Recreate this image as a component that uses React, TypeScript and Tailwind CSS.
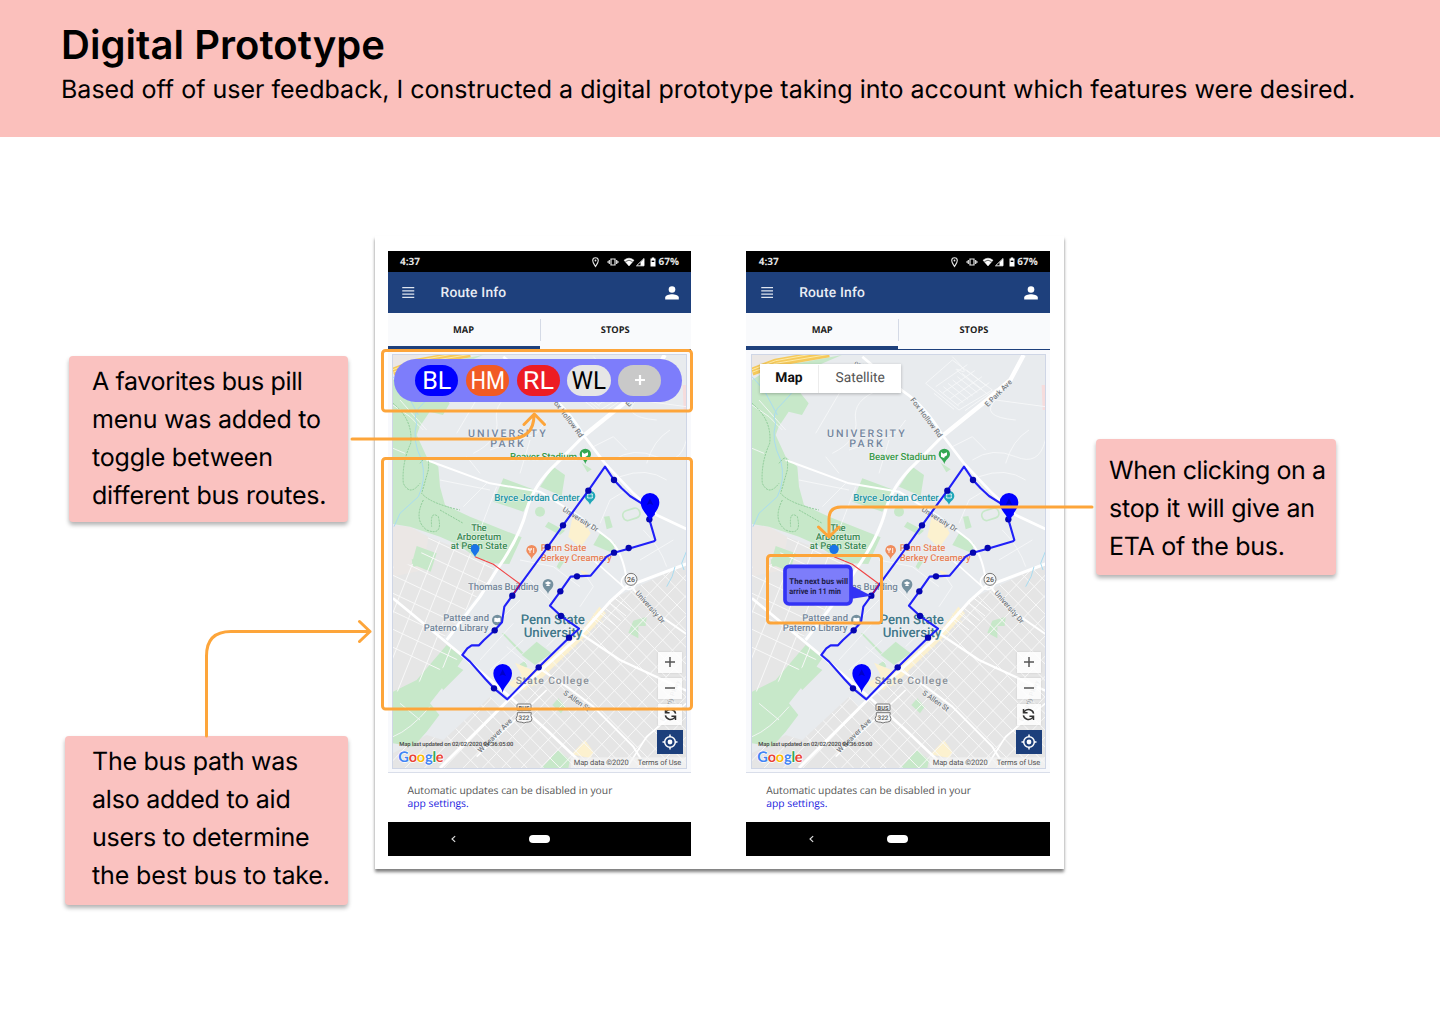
import React from "react";

const STOPS: [number, number][] = [
  [702, 180], [625, 212], [549, 316], [503, 381], [808, 298], [746, 384], [702, 398], [591, 469],
  [541, 514], [543, 588], [567, 653], [476, 742], [342, 805], [344, 631], [397, 527],
];

const GREENS = [
  "39,-120 100,-160 200,-175 309,-195 204,-150 169,-100 209,-50 189,-15 149,-25 119,20 110,45 140,110 175,140 180,200 195,255 270,290 395,340 425,352 388,432 340,430 285,410 235,375 180,350 90,320 39,312",
  "370,175 465,210 430,275 340,245",
  "520,140 555,165 545,228 480,200",
  "605,128 635,148 622,157",
  "505,305 555,332 540,345 495,320",
  "660,340 705,370 700,400 640,375",
  "672,290 688,288 698,322 680,328",
  "110,378 170,400 152,455 95,432",
  "200,675 250,715 205,780 150,850 178,885 140,935 100,980 39,970 39,815 110,780",
  "470,665 515,700 465,735 425,705",
  "365,640 372,640 430,698 424,702",
  "420,732 435,722 442,740 425,750 415,745",
  "760,602 800,590 797,618 775,618 775,655 745,638",
  "535,835 557,860 543,880 517,855",
  "535,990 570,1020 565,1044 485,1044",
  "230,738 250,750 190,810 175,790",
  "95,418 140,420 145,432 100,440",
  "540,420 552,425 538,448 530,440",
];

const YELLOWS = [
  "578,290 620,315 632,340 600,385 565,350",
  "658,560 678,580 625,640 480,780 455,800 440,770 600,640",
  "405,728 480,760 435,810 395,800 385,790 425,765",
  "615,960 640,995 632,1015 575,1003",
  "600,450 625,460 615,475",
];

const range = (n: number) => Array.from({ length: n }, (_, i) => i);

function Pin({ x, y }: { x: number; y: number }) {
  return (
    <g transform={`translate(${x} ${y})`}>
      <path d="M0 58 C-4 38 -28 25 -28 0 A28 28 0 0 1 28 0 C28 25 4 38 0 58Z" fill="#0000ff" />
      <path d="M0 -12 L10 8 L0 4 L-10 8Z" fill="#0000c8" />
    </g>
  );
}

type LabelProps = {
  x: number; y: number; w: number; size: number; fill: string;
  rotate?: number; children: string;
};

function Label({ x, y, w, size, fill, rotate = 0, children }: LabelProps) {
  return (
    <text
      transform={`translate(${x} ${y}) rotate(${rotate})`}
      textLength={w}
      fontSize={size}
      fontWeight={500}
      fill={fill}
      stroke="#f4f6f7"
      strokeWidth={4}
      strokeOpacity={0.6}
      paintOrder="stroke"
    >
      {children}
    </text>
  );
}

function CampusMap({ id, eta }: { id: string; eta?: boolean }) {
  return (
    <svg viewBox="39 -195 879 1239" className="block h-[413px] w-[293px] font-['Roboto',sans-serif] [text-rendering:geometricPrecision]">
      <defs>
        <clipPath id={`${id}-se`}>
          <path d="M919 430 L690 540 L420 810 L360 860 L330 830 L190 960 L140 945 L39 1000 V1044 H919Z" />
        </clipPath>
        <clipPath id={`${id}-sw`}>
          <path d="M145 350 L345 430 L330 480 L190 655 L39 530 V440 L110 430Z M39 540 L245 710 L110 790 L39 820Z" />
        </clipPath>
      </defs>
      <rect x="39" y="-195" width="879" height="1239" fill="#e8ebee" />
      <path d="M919 430 L690 540 L420 810 L360 860 L330 830 L190 960 L140 945 L39 1000 V1044 H919Z" fill="#e5e5e5" />
      <path d="M145 350 L345 430 L330 480 L190 655 L39 530 V400Z M39 540 L245 710 L110 790 L39 820Z" fill="#e6e6e6" />
      <path d="M39 315 L90 320 L145 350 L130 450 L39 470Z" fill="#ebe7e5" />
      <path d="M39 -195 H120 L39 -140Z" fill="#ebe7e5" />
      {GREENS.map((p) => <polygon key={p} points={p} fill="#c7e8c9" />)}
      {YELLOWS.map((p) => <polygon key={p} points={p} fill="#fcf1cf" />)}
      <circle cx="480" cy="275" r="15" fill="#c7e8c9" />
      <rect x="728" y="268" width="52" height="30" rx="14" fill="none" stroke="#c7e8c9" strokeWidth="5" transform="rotate(-18 754 283)" />
      <path d="M908 -105 h11 v75 h-8Z" fill="#f6dcdc" />

      {/* highway in the north-west corner */}
      <path d="M39 -145 L110 -172 L270 -200" fill="none" stroke="#f5c95a" strokeWidth="24" />
      <path d="M39 -143 L110 -170 L270 -197 M39 -151 L110 -178 L220 -198" fill="none" stroke="#fde9a6" strokeWidth="3" />

      {/* residential streets */}
      <g clipPath={`url(#${id}-se)`} stroke="#f8f8f8" strokeWidth="3">
        {range(25).map((i) => <line key={`a${i}`} x1={-500 + i * 58} y1="1100" x2={150 + i * 58} y2="420" />)}
        {range(28).map((i) => <line key={`b${i}`} x1={-320 + i * 49} y1="420" x2={330 + i * 49} y2="1080" />)}
      </g>
      <g clipPath={`url(#${id}-sw)`} stroke="#f8f8f8" strokeWidth="3">
        {range(10).map((i) => <line key={`a${i}`} x1={-120 + i * 54} y1="840" x2={80 + i * 54} y2="340" />)}
        {range(9).map((i) => <line key={`b${i}`} x1="39" y1={250 + i * 54} x2="420" y2={430 + i * 54} />)}
      </g>
      <g fill="none" stroke="#f7f8f9" strokeWidth="2.6">
        <path d="M230 40 L330 -130 M280 100 Q360 60 350 0 T420 -90 M500 0 L470 40 L330 90 M560 -110 L640 -180 L760 -90 L660 -30Z" />
        {range(8).map((i) => <path key={i} d={`M${585 + i * 14} ${-80 - i * 10} l60 48`} />)}
        {range(5).map((i) => <path key={i} d={`M${590 + i * 22} ${-100 + i * 18} l95 -66`} />)}
        <path d="M640 -190 Q700 -130 660 -150 T770 -60 Q720 -10 830 0 M770 -60 L919 -40 M700 120 Q760 80 830 110 T919 60 M720 170 Q800 140 860 180 M800 130 Q820 60 870 30 M740 210 L690 240 L660 310" />
        <path d="M320 190 L250 260 M350 200 L300 330 M180 180 L330 210 M450 60 L420 160 M260 110 L300 160 M640 80 L700 50 L740 90" />
        <path d="M420 420 L520 440 L600 500 M440 470 L520 550 M320 640 L420 540 M300 720 L400 610 M330 750 L430 660 M380 680 L440 730 M500 680 L560 620 M280 730 L340 790 M600 560 L640 500 L620 470" />
        <path d="M780 420 L880 360 M790 330 Q840 380 860 440" />
        <path d="M39 -45 L90 -10 L130 30 M60 -60 L140 30 M75 100 L39 85 M39 950 Q90 930 150 860 M60 850 L120 900" />
      </g>
      <g stroke="#fbf3d8" strokeWidth="2.6">
        {range(11).map((i) => <line key={i} x1={440 + i * 20} y1={770 - i * 19} x2={470 + i * 20} y2={798 - i * 19} />)}
      </g>
      <g stroke="#fff" strokeWidth="3">
        {range(5).map((i) => <line key={i} x1={640 + i * 16} y1={590 - i * 14} x2={690 + i * 16} y2={630 - i * 14} />)}
      </g>

      {/* arterial roads */}
      <g fill="none" stroke="#fff" strokeLinejoin="round">
        <path strokeWidth="13" d="M854 -195 L814 -120 L744 -60 L614 45" />
        <path strokeWidth="9" d="M614 45 L530 130 Q460 195 440 270 Q420 350 350 450 L300 530 L200 660" />
        <path strokeWidth="8" d="M370 -190 L494 -85 Q560 -40 610 45 L675 130 L760 220 L830 285 L919 327" />
        <path strokeWidth="6" d="M140 120 L330 190 L480 215 L600 290 L690 360 Q730 400 740 480 L770 520 L830 580 L919 642" />
        <path strokeWidth="9" d="M919 432 L740 500 L690 545 L600 645 L385 840 L180 1044" />
        <path strokeWidth="8" d="M39 535 L245 705 L400 840 L500 930 L620 1044" />
        <path strokeWidth="7" d="M600 640 L720 720 L919 812" />
        <path strokeWidth="6" d="M470 740 L560 800 L640 860 L760 980 L800 1044" />
        <path strokeWidth="5" d="M919 850 L800 950 L740 1044 M730 500 L640 420" />
        <path strokeWidth="5" d="M500 810 L290 1010" />
        <circle cx="746" cy="486" r="22" strokeWidth="5" />
      </g>

      {/* creeks and trails */}
      <g fill="none" stroke="#a9dcf0" strokeWidth="3">
        <path d="M210 -165 Q180 -100 130 -50 Q95 -20 110 10 Q95 60 125 120 Q140 180 115 230 L60 280 L42 320 M39 -130 L75 -90 L115 -15" />
        <path d="M885 440 Q880 470 860 500 M919 395 L905 430 L912 450" />
      </g>
      <g fill="none" stroke="#80c48b" strokeWidth="2.4" strokeDasharray="6 3">
        <path d="M39 -50 Q100 0 92 70 Q65 130 70 190 Q90 230 120 190 M120 130 Q150 90 145 150 L125 220 Q150 250 240 270 M130 240 Q100 300 140 330 Q190 350 175 290 Q150 270 155 320 M180 270 L250 310" />
      </g>

      {/* labels */}
      <g>
        <Label x={345} y={-168} w={50} size={19} fill="#80868b" rotate={28}>ox Hol</Label>
        <Label x={264} y={50} w={233} size={32} fill="#7587a0">UNIVERSITY</Label>
        <Label x={331} y={80} w={100} size={32} fill="#7587a0">PARK</Label>
        <Label x={390} y={121} w={201} size={29.5} fill="#3a9a4b">Beaver Stadium</Label>
        <Label x={343} y={243} w={256} size={29.5} fill="#1e96a6">Bryce Jordan Center</Label>
        <Label x={274} y={332} w={46} size={28.5} fill="#3c8b55">The</Label>
        <Label x={230} y={360} w={134} size={28.5} fill="#3c8b55">Arboretum</Label>
        <Label x={212} y={388} w={170} size={28.5} fill="#3c8b55">at Penn State</Label>
        <Label x={482} y={394} w={137} size={28.5} fill="#e8835a">Penn State</Label>
        <Label x={482} y={422} w={213} size={28.5} fill="#e8835a">Berkey Creamery</Label>
        <Label x={264} y={511} w={212} size={29} fill="#74879a">Thomas Building</Label>
        <Label x={190} y={603} w={137} size={28.5} fill="#74879a">Pattee and</Label>
        <Label x={131} y={632} w={194} size={28.5} fill="#74879a">Paterno Library</Label>
        <Label x={422} y={611} w={193} size={40} fill="#42788a">Penn State</Label>
        <Label x={431} y={651} w={176} size={40} fill="#42788a">University</Label>
        <Label x={407} y={791} w={219} size={31} fill="#8a9097">State College</Label>
        <Label x={546} y={272} w={122} size={22} fill="#757a80" rotate={32}>University Dr</Label>
        <Label x={765} y={520} w={122} size={22} fill="#757a80" rotate={49}>University Dr</Label>
        <Label x={513} y={-60} w={143} size={22} fill="#757a80" rotate={53}>Fox Hollow Rd</Label>
        <Label x={746} y={-38} w={105} size={22} fill="#757a80" rotate={-45}>E Park Ave</Label>
        <Label x={548} y={822} w={92} size={22} fill="#757a80" rotate={35}>S Allen St</Label>
        <Label x={302} y={1000} w={135} size={22} fill="#757a80" rotate={-45}>W Beaver Ave</Label>
        <Label x={852} y={905} w={130} size={20} fill="#a0a4a8" rotate={-68}>Easterly Pkwy</Label>
      </g>

      {/* road shields */}
      <circle cx="753" cy="478" r="18" fill="#f6f6f6" stroke="#777" strokeWidth="3" />
      <text x="753" y="486" fontSize="21" fontWeight="500" textAnchor="middle" fill="#555">26</text>
      <rect x="411" y="852" width="42" height="20" rx="3" fill="#f6f6f6" stroke="#777" strokeWidth="3" />
      <text x="432" y="869" fontSize="17" fontWeight="700" textAnchor="middle" fill="#555">BUS</text>
      <path d="M412 878 h42 q-4 8 2 18 q0 10 -10 10 q-8 0 -14 3 q-6 -3 -14 -3 q-10 0 -10 -10 q6 -10 4 -18Z" fill="#f6f6f6" stroke="#777" strokeWidth="3" />
      <text x="432" y="901" fontSize="19" fontWeight="500" textAnchor="middle" fill="#555">322</text>

      {/* places */}
      <path d="M616 132 C612 118 599 114 599 103 A17 17 0 0 1 633 103 C633 114 620 118 616 132Z" fill="#34a853" />
      <path d="M606 110 v-14 l7 5 l11 -4 v9 l-8 5 v4Z" fill="#fff" />
      <path d="M630 254 C626 243 614 240 614 228 A16 16 0 0 1 646 228 C646 240 634 243 630 254Z" fill="#1fa7b8" />
      <path d="M623 222 h14 v4 q-3 2 0 4 v4 h-14 v-4 q3 -2 0 -4Z" fill="none" stroke="#fff" strokeWidth="2.5" />
      <path d="M455 418 C451 405 439 402 439 391 A16 16 0 0 1 471 391 C471 402 459 405 455 418Z" fill="#f08c5c" />
      <path d="M450 384 v15 M446 384 v6 h8 v-6 M461 384 v15" fill="none" stroke="#fff" strokeWidth="2.5" />
      <path d="M504 522 C500 510 488 506 488 493 A16 16 0 0 1 520 493 C520 506 508 510 504 522Z" fill="#74909f" />
      <path d="M494 489 l10 -5 l10 5 l-10 5Z M499 494 v4 h10 v-4" fill="#fff" />
      <circle cx="352" cy="600" r="16" fill="#74909f" />
      <path d="M343 594 q5 -2 9 1 q4 -3 9 -1 v12 q-5 -2 -9 1 q-4 -3 -9 -1Z" fill="#fff" />

      <text x="58" y="979" fontSize="17.5" fontWeight="500" fill="#444" textLength="342">Map last updated on 02/02/2020 04:36:05:00</text>
      <rect x="572" y="1012" width="346" height="32" fill="#f5f5f5" fillOpacity="0.7" />
      <text x="581" y="1035" fontSize="22.5" fill="#555" textLength="165">Map data ©2020</text>
      <text x="773" y="1035" fontSize="22.5" fill="#555" textLength="131">Terms of Use</text>
      <text x="55" y="1027" fontSize="44" fontWeight="700" textLength="136" className="font-['Lato',sans-serif]" stroke="#fff" strokeWidth="4" paintOrder="stroke">
        <tspan fill="#4285f4">G</tspan><tspan fill="#ea4335">o</tspan><tspan fill="#fbbc05">o</tspan><tspan fill="#4285f4">g</tspan><tspan fill="#34a853">l</tspan><tspan fill="#ea4335">e</tspan>
      </text>

      {/* bus route */}
      <path d="M285 410 L340 433 L420 492" fill="none" stroke="#f04545" strokeWidth="3.5" />
      <path
        d="M675 140 L702 180 L725 205 L750 228 L785 250 L822 282 L808 298 L826 360 L822 364 L746 386 L702 398 L680 410 L632 467 L572 470 L541 514 L510 557 L543 588 L597 626 L567 653 L476 742 L382 838 L342 805 L316 777 L270 725 L247 705 L262 685 L275 676 L297 676 L312 660 L344 631 L366 607 L373 560 L397 527 L503 381 L549 316 L625 212Z"
        fill="none" stroke="#2020f8" strokeWidth="6.3" strokeLinejoin="round"
      />
      <path d="M420 492 L397 527" stroke="#c01048" strokeWidth="3.5" />
      {STOPS.map(([x, y]) => <circle key={`${x}-${y}`} cx={x} cy={y} r="9.5" fill="#0505b0" />)}
      <Pin x={810} y={247} />
      <Pin x={368} y={760} />
      {eta ? (
        <circle cx="285" cy="388" r="14" fill="#1a73e8" />
      ) : (
        <path d="M285 411 C281 400 272 396 272 386 A13 13 0 0 1 298 386 C298 396 289 400 285 411Z" fill="#1a73e8" />
      )}

      {eta && (
        <g>
          <path d="M334 495 L397 527 L334 537Z" fill="#3333f5" />
          <rect x="138" y="439" width="198" height="113" rx="12" fill="#7d7dfa" stroke="#3333f5" strokeWidth="11" />
          <text x="151" y="492" fontSize="24" fontWeight="700" fill="#1c1c48" textLength="176" lengthAdjust="spacingAndGlyphs">The next bus will</text>
          <text x="151" y="523" fontSize="24" fontWeight="700" fill="#1c1c48" textLength="155" lengthAdjust="spacingAndGlyphs">arrive in 11 min</text>
        </g>
      )}
    </svg>
  );
}

const FAVORITES = [
  { name: "BL", style: "bg-[#0000ff] text-white", glyphs: "scale-x-100" },
  { name: "HM", style: "bg-[#f15a24] text-white", glyphs: "scale-x-[0.87]" },
  { name: "RL", style: "bg-[#ed1c24] text-white", glyphs: "scale-x-[1.08]" },
  { name: "WL", style: "bg-[#e6e6e6] text-black", glyphs: "scale-x-[0.97]" },
];

function FavoritesMenu() {
  return (
    <div className="absolute top-[3.5px] left-[0.5px] flex h-[43.5px] w-[288px] items-center gap-[7.5px] rounded-full bg-[#7d7dfb] pl-[21.5px] font-['Roboto',sans-serif]">
      {FAVORITES.map((f) => (
        <span key={f.name} className={`flex h-[31.5px] w-[43.3px] items-center justify-center rounded-full pt-[2px] text-[25px] leading-none ${f.style}`}>
          <span className={f.glyphs}>{f.name}</span>
        </span>
      ))}
      <span className="flex h-[31.5px] w-[43.3px] items-center justify-center rounded-full bg-[#c9c9c9]">
        <svg viewBox="0 0 10 10" className="size-[10px]"><path d="M5 0v10M0 5h10" stroke="#fff" strokeWidth="2.2" /></svg>
      </span>
    </div>
  );
}

function MapTypeControl() {
  return (
    <div className="absolute top-[8.5px] left-[8px] flex h-[29px] w-[141.5px] items-center bg-white pt-px font-['Roboto',sans-serif] text-[13.8px] shadow-[0_1px_3px_rgba(0,0,0,0.25)] [text-rendering:geometricPrecision]">
      <span className="flex h-full w-[59.5px] items-center justify-center border-r border-[#ececec] font-bold text-[#111]">Map</span>
      <span className="flex h-full flex-1 items-center justify-center text-[#555]">Satellite</span>
    </div>
  );
}

function MapButtons() {
  return (
    <div className="absolute top-[296.5px] left-[264px] flex w-[26px] flex-col items-center gap-[5.3px]">
      <div className="flex h-[21px] w-6 items-center justify-center bg-white/85 shadow-[0_0_2px_rgba(0,0,0,0.12)]">
        <svg viewBox="0 0 10 10" className="size-[10px]"><path d="M5 0v10M0 5h10" stroke="#555" strokeWidth="1.5" /></svg>
      </div>
      <div className="flex h-[21px] w-6 items-center justify-center bg-white/85 shadow-[0_0_2px_rgba(0,0,0,0.12)]">
        <svg viewBox="0 0 10 10" className="size-[10px]"><path d="M0 5h10" stroke="#555" strokeWidth="1.5" /></svg>
      </div>
      <div className="flex h-[21px] w-6 items-center justify-center bg-white/85 shadow-[0_0_2px_rgba(0,0,0,0.12)]">
        <svg viewBox="0 0 14 14" className="h-[13px] w-[13px]" fill="none" stroke="#333" strokeWidth="1.6">
          <path d="M12.5 6A5.6 5.3 0 0 0 3 3.2L1.800 4.500M1.600 1v4.200H6M1.500 8A5.600 5.300 0 0 0 11 10.800L12.200 9.500M12.400 13V8.800H8" />
        </svg>
      </div>
      <div className="flex h-[23.5px] w-[26px] items-center justify-center bg-[#1c3f7c]">
        <svg viewBox="0 0 16 16" className="size-4" fill="none" stroke="#fff" strokeWidth="1.5">
          <circle cx="8" cy="8" r="5.3" />
          <circle cx="8" cy="8" r="2.4" fill="#fff" stroke="none" />
          <path d="M8 .5v2.2M8 13.3v2.2M.5 8h2.2M13.3 8h2.2" />
        </svg>
      </div>
    </div>
  );
}

function StatusBar() {
  return (
    <div className="flex h-[21px] items-center justify-between bg-black pr-[12px] pl-[12.5px] font-['Open_Sans',sans-serif] text-[10px] font-bold text-[#e4e4e4] [text-rendering:geometricPrecision]">
      <span>4:37</span>
      <div className="flex items-center">
        <svg viewBox="0 0 66 12" className="h-[12px] w-[66px]" fill="none" stroke="#e8e8e8">
          <path d="M4.5 10.5C3 8 1.7 6.4 1.7 4.5a2.8 2.8 0 0 1 5.6 0C7.300 6.400 6 8 4.500 10.500Z" strokeWidth="1.1" />
          <circle cx="4.5" cy="4.5" r=".9" fill="#e8e8e8" stroke="none" />
          <path d="M20 3h4v6h-4ZM18.300 4v4M25.700 4v4M17 5.200v1.600M27 5.200v1.600" strokeWidth="1.2" />
          <path d="M33 4.200a8 8 0 0 1 10 0L38 10Z" fill="#fff" stroke="#fff" strokeWidth=".5" />
          <path d="M34.500 5.600a5.500 5.500 0 0 1 7 0" stroke="#000" strokeWidth=".6" />
          <path d="M45.500 9.800h7.500V2.500Z" strokeWidth="1" />
          <path d="M49.500 9.800h3.500V3L49.500 6.300Z" fill="#fff" stroke="none" />
          <path d="M59.500 2.500h1.300v-1h2.400v1H64.500V10.500h-5Z" fill="#fff" stroke="none" />
          <path d="M60.700 5.300h2.600" stroke="#000" strokeWidth="1.4" />
        </svg>
        <span className="ml-[1.5px]">67%</span>
      </div>
    </div>
  );
}

function Phone({ id, eta }: { id: string; eta?: boolean }) {
  return (
    <div className="flex h-[605px] w-[303.5px] flex-col bg-white">
      <StatusBar />
      <div className="flex h-[41px] items-center bg-[#1e407c] pr-[12px] pl-[14.5px]">
        <svg viewBox="0 0 12 11" className="h-[11px] w-[12.5px]" stroke="#dfe5ef" strokeWidth="1.2">
          <path d="M0 .7h12M0 3.900h12M0 7.100h12M0 10.300h12" />
        </svg>
        <span className="ml-[26px] pt-[2px] font-['Roboto',sans-serif] text-[13.8px] font-medium tracking-[0.2px] text-[#e9edf4] [text-rendering:geometricPrecision]">Route Info</span>
        <svg viewBox="0 0 14 14" className="ml-auto size-[14px] shrink-0" fill="#fff">
          <circle cx="7" cy="3.5" r="3.3" />
          <path d="M.2 13.5V11.500C.2 9.200 4.500 8.200 7 8.200s6.800 1 6.800 3.300v2Z" />
        </svg>
      </div>
      <div className="flex h-[37px] bg-[#f9fafc] font-['Open_Sans',sans-serif] text-[9.3px] font-bold text-[#1d1d1d] [text-rendering:geometricPrecision]">
        <div className="flex w-[152px] items-center justify-center border-b-4 border-[#1e407c]">MAP</div>
        <div className="relative flex flex-1 items-center justify-center border-b border-[#1e407c] pb-[3px]">
          <span className="absolute top-[6px] left-0 h-[22px] w-px bg-[#d5dae6]" />
          STOPS
        </div>
      </div>
      <div className="h-[423px] border-b border-[#d9deea] bg-[#f8f9fc] pt-[5px] pl-[5.5px]">
        <div className="relative h-[413px] w-[293px] outline outline-[#cfd6e6]">
          <CampusMap id={id} eta={eta} />
          {eta ? <MapTypeControl /> : <FavoritesMenu />}
          <MapButtons />
        </div>
      </div>
      <div className="flex-1 bg-white pt-[12px] pl-[20px] font-['Open_Sans',sans-serif] text-[10.32px] leading-[13px] text-[#555] [text-rendering:geometricPrecision]">
        <p className="whitespace-nowrap">Automatic updates can be disabled in your</p>
        <p className="font-medium text-[#2222e0]">app settings.</p>
      </div>
      <div className="flex h-[34.5px] items-center bg-black pl-[63px]">
        <svg viewBox="0 0 6 8" className="h-[8px] w-[5px]" fill="none" stroke="#ddd" strokeWidth="1.4"><path d="M5 .5L1.200 4L5 7.500" /></svg>
        <span className="ml-[73px] h-[8px] w-[21px] rounded-full bg-white" />
      </div>
    </div>
  );
}

function Connectors() {
  return (
    <svg viewBox="0 0 1440 1024" className="pointer-events-none absolute inset-0 h-[1024px] w-[1440px]" fill="none" stroke="#fda53a" strokeWidth="3" strokeLinecap="round" strokeLinejoin="round">
      <rect x="382.5" y="350.5" width="309" height="60.5" rx="3" />
      <rect x="382.5" y="458.5" width="309" height="250.5" rx="3" />
      <rect x="767.5" y="555.5" width="114" height="67.5" rx="3" />
      <path d="M352 439H508Q534 439 534 415M524 424.500L534.300 414L544.500 424.500" />
      <path d="M206.500 736V656Q206.500 631.500 231 631.500H370M359.500 621.500L370 631.500L359.500 641.500" />
      <path d="M1092 507H841Q829 507 829 519V536M818.500 527L829 537L839 527" />
    </svg>
  );
}

export default function App() {
  return (
    <div className="relative h-[1024px] w-[1440px] overflow-hidden bg-white font-['Inter',sans-serif] text-black [text-rendering:geometricPrecision]">
      <header className="h-[137px] bg-[#fbc0bc] pt-[21px] pl-[61px]">
        <h1 className="text-[40px] leading-[48px] font-semibold tracking-[0.06px]">Digital Prototype</h1>
        <p className="mt-px text-[25px] leading-[40px] tracking-[0.01px] whitespace-nowrap">Based off of user feedback, I constructed a digital prototype taking into account which features were desired.</p>
      </header>
      <main className="flex items-start">
        <div className="w-[375px] shrink-0 text-[25px] leading-[38px] whitespace-nowrap">
          <div className="mt-[219px] ml-[69px] h-[166px] w-[279px] rounded-[4px] bg-[#fac2c0] pt-[7px] pl-[23px] shadow-[0_3px_4px_rgba(0,0,0,0.3)]">
            <p className="tracking-[-0.36px]">A favorites bus pill</p>
            <p className="tracking-[-0.2px]">menu was added to</p>
            <p className="tracking-[-0.2px]">toggle between</p>
            <p className="tracking-[-0.19px]">different bus routes.</p>
          </div>
          <div className="mt-[214px] ml-[65px] h-[169px] w-[283px] rounded-[4px] bg-[#fac2c0] pt-[7px] pl-[27px] shadow-[0_3px_4px_rgba(0,0,0,0.3)]">
            <p className="tracking-[-0.26px]">The bus path was</p>
            <p className="tracking-[-0.22px]">also added to aid</p>
            <p className="tracking-[-0.24px]">users to determine</p>
            <p className="tracking-[-0.12px]">the best bus to take.</p>
          </div>
        </div>
        <section className="mt-[99px] flex h-[633px] w-[689px] shrink-0 gap-[55.2px] bg-white pt-[15px] pl-[12.5px] shadow-[0_3px_3px_rgba(0,0,0,0.5)]">
          <Phone id="favorites" />
          <Phone id="eta" eta />
        </section>
        <div className="mt-[302px] ml-[32px] h-[136px] w-[240px] rounded-[4px] bg-[#fac2c0] pt-[13px] pl-[13px] text-[25px] leading-[38px] whitespace-nowrap shadow-[0_3px_4px_rgba(0,0,0,0.3)]">
          <p className="tracking-[-0.42px]">When clicking on a</p>
          <p className="tracking-[-0.25px]">stop it will give an</p>
          <p className="tracking-[-0.27px]">ETA of the bus.</p>
        </div>
      </main>
      <Connectors />
    </div>
  );
}
